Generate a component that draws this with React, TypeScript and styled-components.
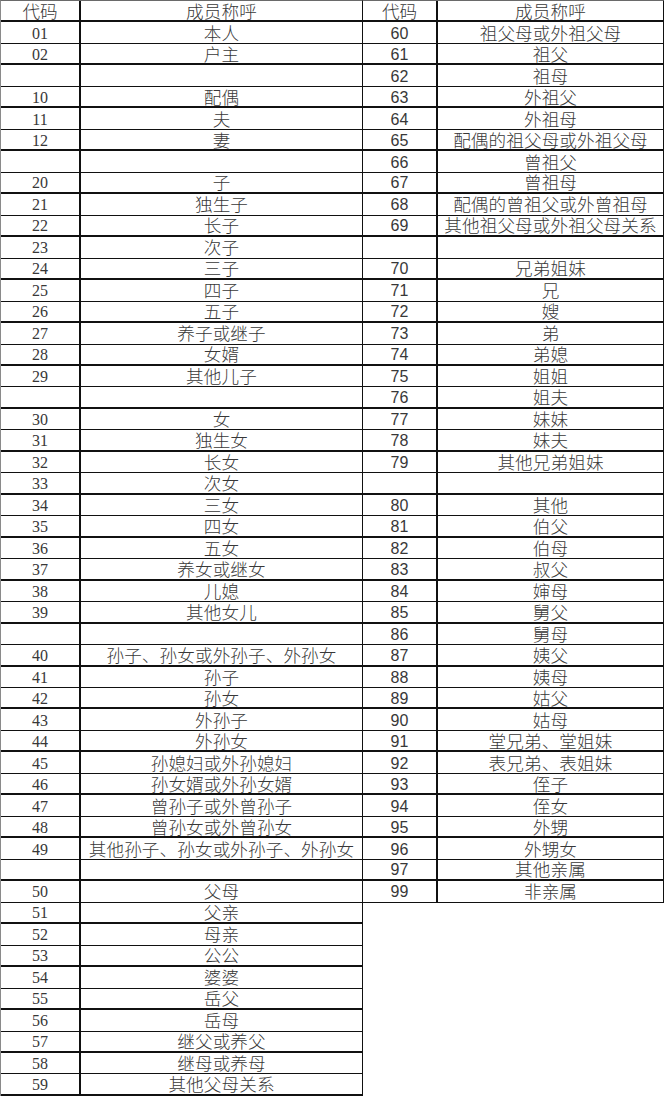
import React from 'react';
import styled, { createGlobalStyle } from 'styled-components';

const GlobalStyle = createGlobalStyle`
  html, body {
    margin: 0;
    padding: 0;
    background: #ffffff;
  }
  body {
    font-family: 'Noto Sans CJK SC', 'Liberation Serif', serif;
    color: #2a2a2a;
  }
`;

const ROW_H = 21.47;

const Page = styled.div`
  display: flex;
  align-items: flex-start;
  width: 664px;
`;

const Table = styled.div<{ $codeW: number; $nameW: number; $left?: boolean }>`
  display: grid;
  grid-template-columns: ${(p) => p.$codeW}px ${(p) => p.$nameW}px;
  border-top: 1px solid #6a6a6a;
  border-left: ${(p) => (p.$left ? '1px solid #8a8a8a' : 'none')};
  border-right: ${(p) => (p.$left ? '1px solid #111' : '2px solid #111')};
`;

const Cell = styled.div<{ $thick?: boolean }>`
  height: ${ROW_H}px;
  box-sizing: border-box;
  display: flex;
  align-items: center;
  justify-content: center;
  border-bottom: ${(p) => (p.$thick ? '2px' : '1px')} solid #111;
  white-space: nowrap;
  overflow: visible;
`;

const CodeCell = styled(Cell)<{ $serif?: boolean }>`
  border-right: 2px solid #111;
  padding-top: 2px;
  font-family: ${(p) => (p.$serif ? "'Liberation Serif', serif" : "'Liberation Sans', sans-serif")};
  font-size: 16px;
  line-height: 16px;
  color: #383838;
`;

const NameCell = styled(Cell)`
  font-family: 'Noto Sans CJK SC', sans-serif;
  font-weight: 300;
  font-size: 17.6px;
  line-height: 16px;
  letter-spacing: 0.1px;
  color: #383838;
`;

const HeadCode = styled(CodeCell)`
  padding-top: 0;
  font-family: 'Noto Sans CJK SC', sans-serif;
  font-weight: 300;
  font-size: 17.6px;
  line-height: 16px;
`;

type Item = [string, string];

const leftRows: Item[] = [
  ['01', '本人'],
  ['02', '户主'],
  ['', ''],
  ['10', '配偶'],
  ['11', '夫'],
  ['12', '妻'],
  ['', ''],
  ['20', '子'],
  ['21', '独生子'],
  ['22', '长子'],
  ['23', '次子'],
  ['24', '三子'],
  ['25', '四子'],
  ['26', '五子'],
  ['27', '养子或继子'],
  ['28', '女婿'],
  ['29', '其他儿子'],
  ['', ''],
  ['30', '女'],
  ['31', '独生女'],
  ['32', '长女'],
  ['33', '次女'],
  ['34', '三女'],
  ['35', '四女'],
  ['36', '五女'],
  ['37', '养女或继女'],
  ['38', '儿媳'],
  ['39', '其他女儿'],
  ['', ''],
  ['40', '孙子、孙女或外孙子、外孙女'],
  ['41', '孙子'],
  ['42', '孙女'],
  ['43', '外孙子'],
  ['44', '外孙女'],
  ['45', '孙媳妇或外孙媳妇'],
  ['46', '孙女婿或外孙女婿'],
  ['47', '曾孙子或外曾孙子'],
  ['48', '曾孙女或外曾孙女'],
  ['49', '其他孙子、孙女或外孙子、外孙女'],
  ['', ''],
  ['50', '父母'],
  ['51', '父亲'],
  ['52', '母亲'],
  ['53', '公公'],
  ['54', '婆婆'],
  ['55', '岳父'],
  ['56', '岳母'],
  ['57', '继父或养父'],
  ['58', '继母或养母'],
  ['59', '其他父母关系'],
];

const rightRows: Item[] = [
  ['60', '祖父母或外祖父母'],
  ['61', '祖父'],
  ['62', '祖母'],
  ['63', '外祖父'],
  ['64', '外祖母'],
  ['65', '配偶的祖父母或外祖父母'],
  ['66', '曾祖父'],
  ['67', '曾祖母'],
  ['68', '配偶的曾祖父或外曾祖母'],
  ['69', '其他祖父母或外祖父母关系'],
  ['', ''],
  ['70', '兄弟姐妹'],
  ['71', '兄'],
  ['72', '嫂'],
  ['73', '弟'],
  ['74', '弟媳'],
  ['75', '姐姐'],
  ['76', '姐夫'],
  ['77', '妹妹'],
  ['78', '妹夫'],
  ['79', '其他兄弟姐妹'],
  ['', ''],
  ['80', '其他'],
  ['81', '伯父'],
  ['82', '伯母'],
  ['83', '叔父'],
  ['84', '婶母'],
  ['85', '舅父'],
  ['86', '舅母'],
  ['87', '姨父'],
  ['88', '姨母'],
  ['89', '姑父'],
  ['90', '姑母'],
  ['91', '堂兄弟、堂姐妹'],
  ['92', '表兄弟、表姐妹'],
  ['93', '侄子'],
  ['94', '侄女'],
  ['95', '外甥'],
  ['96', '外甥女'],
  ['97', '其他亲属'],
  ['99', '非亲属'],
];

const CodeTable = ({
  rows,
  codeW,
  nameW,
  left,
}: {
  rows: Item[];
  codeW: number;
  nameW: number;
  left?: boolean;
}) => (
  <Table $codeW={codeW} $nameW={nameW} $left={left}>
    <HeadCode $thick>代码</HeadCode>
    <NameCell $thick>成员称呼</NameCell>
    {rows.map(([code, name], i) => (
      <React.Fragment key={i}>
        {/* 奇偶行的线粗细不一样，仿照扫描件 */}
        <CodeCell $serif={left} $thick={i % 2 === 1}>
          {code}
        </CodeCell>
        <NameCell $thick={i % 2 === 1}>{name}</NameCell>
      </React.Fragment>
    ))}
  </Table>
);

export default function App() {
  return (
    <>
      <GlobalStyle />
      <Page>
        <CodeTable rows={leftRows} codeW={80} nameW={281} left />
        <CodeTable rows={rightRows} codeW={75} nameW={225} />
      </Page>
    </>
  );
}
